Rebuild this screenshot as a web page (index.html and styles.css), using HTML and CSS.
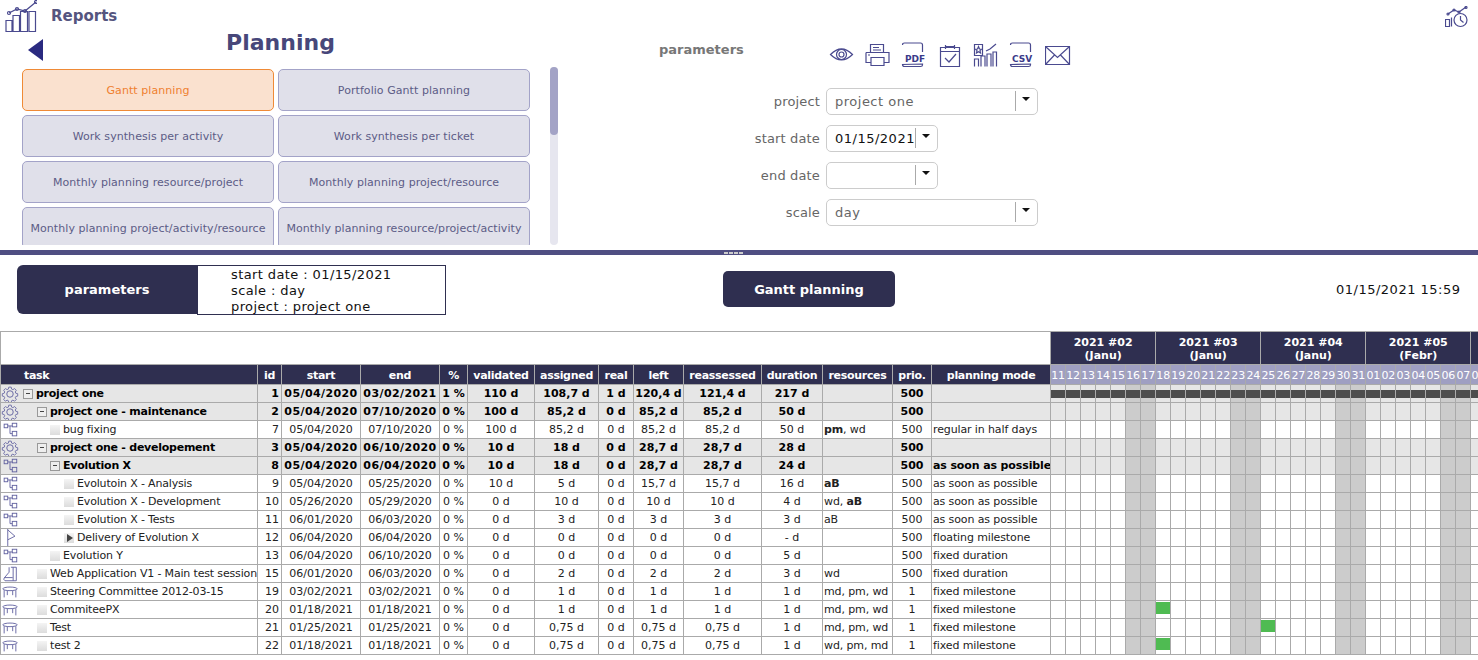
FILE: index.html
```html
<!DOCTYPE html>
<html lang="en">
<head>
    <meta charset="UTF-8">
    <title>Reports</title>
    <link rel="stylesheet" href="styles.css">
</head>
<body>
    <!-- shared table icons -->
    <svg class="defs" width="0" height="0">
        <symbol id="i-gear" viewBox="0 0 20 20">
            <path d="M8.5 1.5h3l.5 2.4 1.6.7 2.1-1.3 2.1 2.1-1.3 2.1.7 1.6 2.3.5v3l-2.3.5-.7 1.6 1.3 2.1-2.1 2.1-2.1-1.3-1.6.7-.5 2.3h-3l-.5-2.3-1.6-.7-2.1 1.3-2.1-2.1 1.3-2.1-.7-1.6-2.3-.5v-3l2.3-.5.7-1.6-1.3-2.1 2.1-2.1 2.1 1.3 1.6-.7z" transform="translate(1 1) scale(.9)"/>
            <circle cx="10" cy="10" r="3.6"/>
        </symbol>
        <symbol id="i-tree" viewBox="0 0 20 20">
            <rect x="3.5" y="3.5" width="4" height="4"/>
            <rect x="12.5" y="2.5" width="5" height="4"/>
            <rect x="12.5" y="11.5" width="5" height="5"/>
            <path d="M7.5 5.500h5M10 5.500v8.500h2.500"/>
        </symbol>
        <symbol id="i-flag" viewBox="0 0 20 20">
            <path d="M7.5 0v20M7.500 1l8 7-8 4"/>
        </symbol>
        <symbol id="i-flask" viewBox="0 0 20 20">
            <path d="M11 2.5h6v15H4.500q-2-1 -1-3L9 8V2.500M13.500 2.500v15M4 14h9"/>
        </symbol>
        <symbol id="i-table" viewBox="0 0 20 20">
            <ellipse cx="10" cy="6.500" rx="8" ry="2"/>
            <path d="M3.500 8v8M16.500 8v8M7 8.500v5M13 8.500v5"/>
        </symbol>
    </svg>

    <div class="top">
        <div class="brand">
            <div class="brand-left">
                <svg class="icon-reports" width="32" height="32" viewBox="0 0 32 32">
                    <path d="M1 20.500h6v11H1zM8 15.500h6.500v16H8zM15.500 11.500h7v20h-7zM24 11.500h6.500v20H24z"/>
                    <path d="M4 13l8-4 8 2 11-9"/>
                    <circle cx="4" cy="13" r="1.500"/><circle cx="12" cy="9" r="1.500"/><circle cx="20" cy="11" r="1.500"/><circle cx="31" cy="2" r="1.500"/>
                </svg>
                <span class="brand-name">Reports</span>
            </div>
            <svg class="icon-history" width="24" height="22" viewBox="0 0 24 22">
                <path d="M.5 13.500h4v7h-4zM6.500 11.500v9"/>
                <circle cx="15.500" cy="14" r="6.500"/>
                <path d="M15.500 10v4l3 2.500M3 8l6-4 5 2 7-5"/>
                <circle cx="3" cy="8" r="1"/><circle cx="9" cy="4" r="1"/><circle cx="14" cy="6" r="1"/><circle cx="21" cy="1.500" r="1"/>
            </svg>
        </div>

        <div class="top-body">
            <div class="left-panel">
                <div class="title-row">
                    <span class="back"></span>
                    <h1>Planning</h1>
                </div>
                <div class="menu-wrap">
                    <div class="menu">
                        <div class="report current">Gantt planning</div>
                        <div class="report">Portfolio Gantt planning</div>
                        <div class="report">Work synthesis per activity</div>
                        <div class="report">Work synthesis per ticket</div>
                        <div class="report">Monthly planning resource/project</div>
                        <div class="report">Monthly planning project/resource</div>
                        <div class="report">Monthly planning project/activity/resource</div>
                        <div class="report">Monthly planning resource/project/activity</div>
                    </div>
                    <div class="scrollbar"><div class="thumb"></div></div>
                </div>
            </div>

            <div class="right-panel">
                <div class="tools">
                    <span class="tools-title">parameters</span>
                    <svg class="tool" width="26" height="26" viewBox="0 0 26 26">
                        <path d="M1.500 12.500q11-11 22 0q-11 11-22 0z"/>
                        <circle cx="12.500" cy="12.500" r="5"/><circle cx="12.500" cy="12.500" r="2.500"/>
                    </svg>
                    <svg class="tool" width="26" height="26" viewBox="0 0 26 26">
                        <path d="M5.500 10V2.500h13V10M1 10.500h23v10h-5M6 20.500H1v-10M6 15.500h13v8H6z"/>
                        <path d="M8 5.500h6M8 8h8M3 13h2"/>
                    </svg>
                    <svg class="tool" width="26" height="26" viewBox="0 0 26 26">
                        <path d="M1.500 3q0-2 2-2h16q2 0 2 2V10M21.500 22v1q0 1.500-2 1.500H3.500q-2 0-2-2z"/>
                        <text class="tool-text" x="4" y="20">PDF</text>
                    </svg>
                    <svg class="tool" width="26" height="26" viewBox="0 0 26 26">
                        <path d="M3.500 5.500h19v19h-19zM3.500 9.500h19M8.500 3v4M17.500 3v4M8.500 4.500h9"/>
                        <path d="M8 16l4 4 7-8"/>
                    </svg>
                    <svg class="tool" width="26" height="26" viewBox="0 0 26 26">
                        <path d="M1.500 2.500h8v11h-8zM1.500 24.500V17h4v7.500M8 24.500V14h4v10.500M14 24.500V12h4v12.500M20 24.500V10h3.500v14.500"/>
                        <path d="M13 9l4-2 6-5"/>
                        <path d="M5.500 4.500l1 2.500 2 .2-1.500 1.500.5 2.300-2-1.200-2 1.200.5-2.300-1.500-1.500 2-.2z"/>
                    </svg>
                    <svg class="tool" width="26" height="26" viewBox="0 0 26 26">
                        <path d="M1.500 3q0-2 2-2h16q2 0 2 2V10M21.500 22v1q0 1.500-2 1.500H3.500q-2 0-2-2z"/>
                        <text class="tool-text" x="3" y="20">CSV</text>
                    </svg>
                    <svg class="tool" width="26" height="26" viewBox="0 0 26 26">
                        <path d="M.5 4.500h24v18H.5zM.5 4.500l12 11 12-11M.5 22.500l9-9.500M24.500 22.500l-9-9.500"/>
                    </svg>
                </div>
                <div class="form-row">
                    <label>project</label>
                    <div class="field wide"><span class="value">project one</span><span class="drop"></span></div>
                </div>
                <div class="form-row">
                    <label>start date</label>
                    <div class="field"><span class="value date">01/15/2021</span><span class="drop"></span></div>
                </div>
                <div class="form-row">
                    <label>end date</label>
                    <div class="field"><span class="value"></span><span class="drop"></span></div>
                </div>
                <div class="form-row">
                    <label>scale</label>
                    <div class="field wide"><span class="value">day</span><span class="drop"></span></div>
                </div>
            </div>
        </div>
    </div>

    <div class="splitter"><span class="grip"></span></div>

    <div class="summary">
        <div class="param-title">parameters</div>
        <div class="param-box">
            <div>start date : 01/15/2021</div>
            <div>scale : day</div>
            <div>project : project one</div>
        </div>
        <div class="report-name">Gantt planning</div>
        <div class="printed">01/15/2021 15:59</div>
    </div>

    <div class="gantt-wrap">
        <table class="gantt">
            <colgroup>
                <col class="c-task"><col class="c-id"><col class="c-date"><col class="c-date"><col class="c-pct">
                <col class="c-val"><col class="c-asg"><col class="c-real"><col class="c-left"><col class="c-rea">
                <col class="c-dur"><col class="c-res"><col class="c-pri"><col class="c-mode">
                <col class="c-d"><col class="c-d"><col class="c-d"><col class="c-d"><col class="c-d"><col class="c-d"><col class="c-d">
                <col class="c-d"><col class="c-d"><col class="c-d"><col class="c-d"><col class="c-d"><col class="c-d"><col class="c-d">
                <col class="c-d"><col class="c-d"><col class="c-d"><col class="c-d"><col class="c-d"><col class="c-d"><col class="c-d">
                <col class="c-d"><col class="c-d"><col class="c-d"><col class="c-d"><col class="c-d"><col class="c-d"><col class="c-d">
                <col class="c-d">
            </colgroup>
            <thead>
                <tr class="weeks">
                    <th colspan="14" class="blank"></th>
                    <th colspan="7">2021 #02<br>(Janu)</th>
                    <th colspan="7">2021 #03<br>(Janu)</th>
                    <th colspan="7">2021 #04<br>(Janu)</th>
                    <th colspan="7">2021 #05<br>(Febr)</th>
                    <th></th>
                </tr>
                <tr class="heads">
                    <th class="h-task">task</th><th>id</th><th>start</th><th>end</th><th>%</th><th>validated</th><th>assigned</th><th>real</th><th>left</th><th>reassessed</th><th>duration</th><th>resources</th><th>prio.</th><th>planning mode</th>
                    <th class="day">11</th><th class="day">12</th><th class="day">13</th><th class="day">14</th><th class="day">15</th><th class="day">16</th><th class="day">17</th>
                    <th class="day">18</th><th class="day">19</th><th class="day">20</th><th class="day">21</th><th class="day">22</th><th class="day">23</th><th class="day">24</th>
                    <th class="day">25</th><th class="day">26</th><th class="day">27</th><th class="day">28</th><th class="day">29</th><th class="day">30</th><th class="day">31</th>
                    <th class="day">01</th><th class="day">02</th><th class="day">03</th><th class="day">04</th><th class="day">05</th><th class="day">06</th><th class="day">07</th>
                    <th class="day">08</th>
                </tr>
            </thead>
            <tbody>
                <tr class="group">
                    <td class="task"><div class="t"><svg class="ti"><use href="#i-gear"/></svg><span class="tog minus lv0"></span>project one</div></td>
                    <td class="r">1</td><td>05/04/2020</td><td>03/02/2021</td><td>1 %</td><td>110 d</td><td>108,7 d</td><td>1 d</td><td>120,4 d</td><td>121,4 d</td><td>217 d</td><td class="l"></td><td>500</td><td class="l"></td>
                    <td><i class="bar"></i></td><td><i class="bar"></i></td><td><i class="bar"></i></td><td><i class="bar"></i></td><td><i class="bar"></i></td><td><i class="bar"></i></td><td><i class="bar"></i></td>
                    <td><i class="bar"></i></td><td><i class="bar"></i></td><td><i class="bar"></i></td><td><i class="bar"></i></td><td><i class="bar"></i></td><td><i class="bar"></i></td><td><i class="bar"></i></td>
                    <td><i class="bar"></i></td><td><i class="bar"></i></td><td><i class="bar"></i></td><td><i class="bar"></i></td><td><i class="bar"></i></td><td><i class="bar"></i></td><td><i class="bar"></i></td>
                    <td><i class="bar"></i></td><td><i class="bar"></i></td><td><i class="bar"></i></td><td><i class="bar"></i></td><td><i class="bar"></i></td><td><i class="bar"></i></td><td><i class="bar"></i></td>
                    <td><i class="bar"></i></td>
                </tr>
                <tr class="group">
                    <td class="task"><div class="t"><svg class="ti"><use href="#i-gear"/></svg><span class="tog minus lv1"></span>project one - maintenance</div></td>
                    <td class="r">2</td><td>05/04/2020</td><td>07/10/2020</td><td>0 %</td><td>100 d</td><td>85,2 d</td><td>0 d</td><td>85,2 d</td><td>85,2 d</td><td>50 d</td><td class="l"></td><td>500</td><td class="l"></td>
                    <td></td><td></td><td></td><td></td><td></td><td></td><td></td><td></td><td></td><td></td><td></td><td></td><td></td><td></td><td></td><td></td><td></td><td></td><td></td><td></td><td></td><td></td><td></td><td></td><td></td><td></td><td></td><td></td><td></td>
                </tr>
                <tr>
                    <td class="task"><div class="t"><svg class="ti"><use href="#i-tree"/></svg><span class="tog lv2"></span>bug fixing</div></td>
                    <td class="r">7</td><td>05/04/2020</td><td>07/10/2020</td><td>0 %</td><td>100 d</td><td>85,2 d</td><td>0 d</td><td>85,2 d</td><td>85,2 d</td><td>50 d</td><td class="l"><b>pm</b>, wd</td><td>500</td><td class="l">regular in half days</td>
                    <td></td><td></td><td></td><td></td><td></td><td></td><td></td><td></td><td></td><td></td><td></td><td></td><td></td><td></td><td></td><td></td><td></td><td></td><td></td><td></td><td></td><td></td><td></td><td></td><td></td><td></td><td></td><td></td><td></td>
                </tr>
                <tr class="group">
                    <td class="task"><div class="t"><svg class="ti"><use href="#i-gear"/></svg><span class="tog minus lv1"></span>project one - developement</div></td>
                    <td class="r">3</td><td>05/04/2020</td><td>06/10/2020</td><td>0 %</td><td>10 d</td><td>18 d</td><td>0 d</td><td>28,7 d</td><td>28,7 d</td><td>28 d</td><td class="l"></td><td>500</td><td class="l"></td>
                    <td></td><td></td><td></td><td></td><td></td><td></td><td></td><td></td><td></td><td></td><td></td><td></td><td></td><td></td><td></td><td></td><td></td><td></td><td></td><td></td><td></td><td></td><td></td><td></td><td></td><td></td><td></td><td></td><td></td>
                </tr>
                <tr class="group">
                    <td class="task"><div class="t"><svg class="ti"><use href="#i-tree"/></svg><span class="tog minus lv2"></span>Evolution X</div></td>
                    <td class="r">8</td><td>05/04/2020</td><td>06/04/2020</td><td>0 %</td><td>10 d</td><td>18 d</td><td>0 d</td><td>28,7 d</td><td>28,7 d</td><td>24 d</td><td class="l"></td><td>500</td><td class="l">as soon as possible</td>
                    <td></td><td></td><td></td><td></td><td></td><td></td><td></td><td></td><td></td><td></td><td></td><td></td><td></td><td></td><td></td><td></td><td></td><td></td><td></td><td></td><td></td><td></td><td></td><td></td><td></td><td></td><td></td><td></td><td></td>
                </tr>
                <tr>
                    <td class="task"><div class="t"><svg class="ti"><use href="#i-tree"/></svg><span class="tog lv3"></span>Evolutoin X - Analysis</div></td>
                    <td class="r">9</td><td>05/04/2020</td><td>05/25/2020</td><td>0 %</td><td>10 d</td><td>5 d</td><td>0 d</td><td>15,7 d</td><td>15,7 d</td><td>16 d</td><td class="l"><b>aB</b></td><td>500</td><td class="l">as soon as possible</td>
                    <td></td><td></td><td></td><td></td><td></td><td></td><td></td><td></td><td></td><td></td><td></td><td></td><td></td><td></td><td></td><td></td><td></td><td></td><td></td><td></td><td></td><td></td><td></td><td></td><td></td><td></td><td></td><td></td><td></td>
                </tr>
                <tr>
                    <td class="task"><div class="t"><svg class="ti"><use href="#i-tree"/></svg><span class="tog lv3"></span>Evolution X - Development</div></td>
                    <td class="r">10</td><td>05/26/2020</td><td>05/29/2020</td><td>0 %</td><td>0 d</td><td>10 d</td><td>0 d</td><td>10 d</td><td>10 d</td><td>4 d</td><td class="l">wd, <b>aB</b></td><td>500</td><td class="l">as soon as possible</td>
                    <td></td><td></td><td></td><td></td><td></td><td></td><td></td><td></td><td></td><td></td><td></td><td></td><td></td><td></td><td></td><td></td><td></td><td></td><td></td><td></td><td></td><td></td><td></td><td></td><td></td><td></td><td></td><td></td><td></td>
                </tr>
                <tr>
                    <td class="task"><div class="t"><svg class="ti"><use href="#i-tree"/></svg><span class="tog lv3"></span>Evolution X - Tests</div></td>
                    <td class="r">11</td><td>06/01/2020</td><td>06/03/2020</td><td>0 %</td><td>0 d</td><td>3 d</td><td>0 d</td><td>3 d</td><td>3 d</td><td>3 d</td><td class="l">aB</td><td>500</td><td class="l">as soon as possible</td>
                    <td></td><td></td><td></td><td></td><td></td><td></td><td></td><td></td><td></td><td></td><td></td><td></td><td></td><td></td><td></td><td></td><td></td><td></td><td></td><td></td><td></td><td></td><td></td><td></td><td></td><td></td><td></td><td></td><td></td>
                </tr>
                <tr>
                    <td class="task"><div class="t"><svg class="ti"><use href="#i-flag"/></svg><span class="tog mile lv3"></span>Delivery of Evolution X</div></td>
                    <td class="r">12</td><td>06/04/2020</td><td>06/04/2020</td><td>0 %</td><td>0 d</td><td>0 d</td><td>0 d</td><td>0 d</td><td>0 d</td><td>- d</td><td class="l"></td><td>500</td><td class="l">floating milestone</td>
                    <td></td><td></td><td></td><td></td><td></td><td></td><td></td><td></td><td></td><td></td><td></td><td></td><td></td><td></td><td></td><td></td><td></td><td></td><td></td><td></td><td></td><td></td><td></td><td></td><td></td><td></td><td></td><td></td><td></td>
                </tr>
                <tr>
                    <td class="task"><div class="t"><svg class="ti"><use href="#i-tree"/></svg><span class="tog lv2"></span>Evolution Y</div></td>
                    <td class="r">13</td><td>06/04/2020</td><td>06/10/2020</td><td>0 %</td><td>0 d</td><td>0 d</td><td>0 d</td><td>0 d</td><td>0 d</td><td>5 d</td><td class="l"></td><td>500</td><td class="l">fixed duration</td>
                    <td></td><td></td><td></td><td></td><td></td><td></td><td></td><td></td><td></td><td></td><td></td><td></td><td></td><td></td><td></td><td></td><td></td><td></td><td></td><td></td><td></td><td></td><td></td><td></td><td></td><td></td><td></td><td></td><td></td>
                </tr>
                <tr>
                    <td class="task"><div class="t"><svg class="ti"><use href="#i-flask"/></svg><span class="tog lv1"></span>Web Application V1 - Main test session</div></td>
                    <td class="r">15</td><td>06/01/2020</td><td>06/03/2020</td><td>0 %</td><td>0 d</td><td>2 d</td><td>0 d</td><td>2 d</td><td>2 d</td><td>3 d</td><td class="l">wd</td><td>500</td><td class="l">fixed duration</td>
                    <td></td><td></td><td></td><td></td><td></td><td></td><td></td><td></td><td></td><td></td><td></td><td></td><td></td><td></td><td></td><td></td><td></td><td></td><td></td><td></td><td></td><td></td><td></td><td></td><td></td><td></td><td></td><td></td><td></td>
                </tr>
                <tr>
                    <td class="task"><div class="t"><svg class="ti"><use href="#i-table"/></svg><span class="tog lv1"></span>Steering Committee 2012-03-15</div></td>
                    <td class="r">19</td><td>03/02/2021</td><td>03/02/2021</td><td>0 %</td><td>0 d</td><td>1 d</td><td>0 d</td><td>1 d</td><td>1 d</td><td>1 d</td><td class="l">md, pm, wd</td><td>1</td><td class="l">fixed milestone</td>
                    <td></td><td></td><td></td><td></td><td></td><td></td><td></td><td></td><td></td><td></td><td></td><td></td><td></td><td></td><td></td><td></td><td></td><td></td><td></td><td></td><td></td><td></td><td></td><td></td><td></td><td></td><td></td><td></td><td></td>
                </tr>
                <tr>
                    <td class="task"><div class="t"><svg class="ti"><use href="#i-table"/></svg><span class="tog lv1"></span>CommiteePX</div></td>
                    <td class="r">20</td><td>01/18/2021</td><td>01/18/2021</td><td>0 %</td><td>0 d</td><td>1 d</td><td>0 d</td><td>1 d</td><td>1 d</td><td>1 d</td><td class="l">md, pm, wd</td><td>1</td><td class="l">fixed milestone</td>
                    <td></td><td></td><td></td><td></td><td></td><td></td><td></td><td><i class="done"></i></td><td></td><td></td><td></td><td></td><td></td><td></td><td></td><td></td><td></td><td></td><td></td><td></td><td></td><td></td><td></td><td></td><td></td><td></td><td></td><td></td><td></td>
                </tr>
                <tr>
                    <td class="task"><div class="t"><svg class="ti"><use href="#i-table"/></svg><span class="tog lv1"></span>Test</div></td>
                    <td class="r">21</td><td>01/25/2021</td><td>01/25/2021</td><td>0 %</td><td>0 d</td><td>0,75 d</td><td>0 d</td><td>0,75 d</td><td>0,75 d</td><td>1 d</td><td class="l">md, pm, wd</td><td>1</td><td class="l">fixed milestone</td>
                    <td></td><td></td><td></td><td></td><td></td><td></td><td></td><td></td><td></td><td></td><td></td><td></td><td></td><td></td><td><i class="done"></i></td><td></td><td></td><td></td><td></td><td></td><td></td><td></td><td></td><td></td><td></td><td></td><td></td><td></td><td></td>
                </tr>
                <tr>
                    <td class="task"><div class="t"><svg class="ti"><use href="#i-table"/></svg><span class="tog lv1"></span>test 2</div></td>
                    <td class="r">22</td><td>01/18/2021</td><td>01/18/2021</td><td>0 %</td><td>0 d</td><td>0,75 d</td><td>0 d</td><td>0,75 d</td><td>0,75 d</td><td>1 d</td><td class="l">wd, pm, md</td><td>1</td><td class="l">fixed milestone</td>
                    <td></td><td></td><td></td><td></td><td></td><td></td><td></td><td><i class="done"></i></td><td></td><td></td><td></td><td></td><td></td><td></td><td></td><td></td><td></td><td></td><td></td><td></td><td></td><td></td><td></td><td></td><td></td><td></td><td></td><td></td><td></td>
                </tr>
            </tbody>
        </table>
    </div>
</body>
</html>
```

FILE: styles.css
```css
html, body {
    margin: 0;
    padding: 0;
    height: 660px;
    overflow: hidden;
    background: white;
    font-family: "DejaVu Sans", Verdana, sans-serif;
    color: #111;
}
.defs {
    display: block;
    height: 0;
}

/* top panel */
.top {
    height: 250px;
    overflow: hidden;
}
.brand {
    height: 32px;
    display: flex;
    justify-content: space-between;
}
.brand-left {
    display: flex;
    padding-left: 5px;
}
.brand-name {
    margin-left: 14px;
    padding-top: 7px;
    font-size: 15px;
    font-weight: bold;
    color: #55557f;
}
.icon-reports,
.icon-history,
.tool {
    fill: none;
    stroke: #4a4a8f;
    stroke-width: 1.2;
}
.icon-history {
    margin: 6px 9px 0 0;
}
.top-body {
    display: flex;
}

/* report list */
.left-panel {
    width: 560px;
    flex: none;
}
.title-row {
    height: 37px;
    display: flex;
    padding-left: 28px;
}
.back {
    width: 0;
    height: 0;
    margin-top: 7px;
    border-style: solid;
    border-width: 11px 15px 11px 0;
    border-color: transparent #2a2a80 transparent transparent;
}
.title-row h1 {
    width: 475px;
    margin: 0;
    padding-top: 1px;
    text-align: center;
    font-size: 22px;
    line-height: 20px;
    color: #47477a;
}
.menu-wrap {
    height: 176px;
    margin-top: -2px;
    padding-top: 2px;
    display: flex;
    overflow: hidden;
}
.menu {
    width: 508px;
    margin-left: 22px;
    display: grid;
    grid-template-columns: 252px 252px;
    grid-auto-rows: 42px;
    gap: 4px;
}
.report {
    box-sizing: border-box;
    display: flex;
    align-items: center;
    justify-content: center;
    border: 1px solid #a3a3c8;
    border-radius: 5px;
    background: #e0e0ea;
    color: #5c5c86;
    font-size: 11px;
    letter-spacing: .06px;
    white-space: nowrap;
}
.report.current {
    background: #fae1cf;
    border-color: #ef8a36;
    color: #ef8030;
}
.scrollbar {
    width: 8px;
    height: 178px;
    margin: -2px 0 0 20px;
    border-radius: 4px;
    background: #e6e6ef;
}
.thumb {
    height: 68px;
    border-radius: 4px;
    background: #a3a3c6;
}

/* parameters form */
.right-panel {
    flex: 1;
}
.tools {
    display: flex;
    gap: 10px;
    height: 26px;
    padding: 10px 0 20px 99px;
}
.tools-title {
    width: 160px;
    padding-top: 1px;
    font-size: 13px;
    line-height: 14px;
    font-weight: bold;
    color: #777;
}
.tool-text {
    fill: #3a3a8a;
    stroke: none;
    font-size: 9px;
    font-weight: bold;
}
.form-row {
    display: flex;
    align-items: center;
    margin-bottom: 10px;
}
.form-row label {
    width: 260px;
    margin-right: 6px;
    text-align: right;
    font-size: 13px;
    color: #666;
    letter-spacing: .15px;
}
.field {
    box-sizing: border-box;
    width: 112px;
    height: 27px;
    display: flex;
    border: 1px solid #ccc;
    border-radius: 5px;
}
.field.wide {
    width: 212px;
}
.value {
    flex: 1;
    padding: 4px 0 0 8px;
    font-size: 13px;
    line-height: 17px;
    color: #666;
    letter-spacing: .5px;
}
.value.date {
    color: #111;
}
.drop {
    width: 21px;
    height: 20px;
    margin-top: 2px;
    border-left: 1px solid #aaa;
    position: relative;
}
.drop::after {
    content: "";
    position: absolute;
    top: 6px;
    left: 6px;
    border-style: solid;
    border-width: 4px 4px 0 4px;
    border-color: #111 transparent transparent transparent;
}

/* splitter */
.splitter {
    height: 5px;
    padding-right: 10px;
    background: #4f4e82;
    display: flex;
    justify-content: center;
}
.grip {
    width: 20px;
    height: 2px;
    margin-top: 2px;
    background: repeating-linear-gradient(90deg, #ccc 0 4px, #4f4e82 4px 5px);
}

/* summary line */
.summary {
    height: 50px;
    margin-top: 10px;
    padding-left: 17px;
    display: flex;
    font-size: 13px;
}
.param-title {
    width: 180px;
    height: 49px;
    display: flex;
    align-items: center;
    justify-content: center;
    background: #2f2f50;
    color: white;
    font-weight: bold;
    border-radius: 6px 0 0 6px;
}
.param-box {
    box-sizing: border-box;
    width: 249px;
    height: 50px;
    padding: 1px 0 0 33px;
    border: 1px solid #2f2f50;
    line-height: 16px;
    letter-spacing: .4px;
}
.report-name {
    width: 172px;
    height: 36px;
    margin: 6px 0 0 277px;
    display: flex;
    align-items: center;
    justify-content: center;
    background: #2f2f50;
    color: white;
    font-weight: bold;
    border-radius: 5px;
}
.printed {
    margin-left: 441px;
    padding-top: 17px;
    white-space: nowrap;
    letter-spacing: .5px;
}

/* gantt table */
.gantt-wrap {
    margin-top: 16px;
    overflow: hidden;
}
.gantt {
    table-layout: fixed;
    border-collapse: collapse;
    width: 1485px;
    font-size: 11px;
}
.c-task { width: 257px; }
.c-id { width: 24px; }
.c-date { width: 79px; }
.c-pct { width: 28px; }
.c-val { width: 67px; }
.c-asg { width: 64px; }
.c-real { width: 35px; }
.c-left { width: 50px; }
.c-rea { width: 78px; }
.c-dur { width: 61px; }
.c-res { width: 70px; }
.c-pri { width: 39px; }
.c-mode { width: 119px; }
.c-d { width: 15px; }

.gantt th,
.gantt td {
    border: 1px solid #aaa;
    padding: 0;
    white-space: nowrap;
    overflow: hidden;
}
.gantt th {
    padding-top: 1px;
    background: #2f2f50;
    color: white;
    font-weight: bold;
    text-align: center;
    line-height: 13px;
}
.weeks {
    height: 33px;
}
.weeks th.blank {
    background: white;
}
.heads {
    height: 20px;
}
.heads th {
    letter-spacing: -.3px;
}
.gantt th.h-task {
    text-align: left;
    padding-left: 23px;
}
.gantt th.day {
    background: #9f9fc2;
    font-weight: normal;
    letter-spacing: -.2px;
}
.gantt tbody tr {
    height: 18px;
}
.gantt td {
    text-align: center;
    line-height: 16px;
    color: #222;
}
.gantt td:nth-child(-n+14):not(.task) {
    padding-top: 1px;
}
.gantt td.l {
    text-align: left;
    padding-left: 1px;
    letter-spacing: -.12px;
}
.gantt td.r {
    text-align: right;
    padding-right: 2px;
}
.gantt tr.group {
    background: #e6e6e6;
    font-weight: bold;
}
.gantt tr.group td {
    color: #000;
}
.gantt tr.group td:nth-child(3),
.gantt tr.group td:nth-child(4) {
    letter-spacing: .4px;
}
.gantt td:nth-child(n+15):nth-child(7n+6),
.gantt td:nth-child(n+15):nth-child(7n+7) {
    background: #ccc;
}
.gantt td.task {
    text-align: left;
    letter-spacing: -.16px;
}
.gantt tr.group td.task {
    letter-spacing: -.25px;
}
.t {
    display: flex;
    align-items: center;
    height: 17px;
    overflow: hidden;
}
.ti {
    width: 18px;
    height: 18px;
    flex: none;
    margin-right: 2px;
    fill: none;
    stroke: #5f5f9e;
    stroke-width: 1;
}
.tog {
    box-sizing: border-box;
    width: 10px;
    height: 10px;
    flex: none;
    margin-right: 3px;
    background: linear-gradient(#f4f4f4, #dcdcdc);
    position: relative;
}
.lv0 { margin-left: 2px; }
.lv1 { margin-left: 16px; }
.lv2 { margin-left: 29px; }
.lv3 { margin-left: 43px; }
.tog.minus {
    border: 1px solid #999;
    background: #eee;
}
.tog.minus::after {
    content: "";
    position: absolute;
    left: 2px;
    top: 3px;
    width: 4px;
    height: 1px;
    background: #444;
}
.tog.mile::after {
    content: "";
    position: absolute;
    left: 3px;
    top: 1px;
    border-style: solid;
    border-width: 4px 0 4px 6px;
    border-color: transparent transparent transparent #444;
}
.bar {
    display: block;
    height: 8px;
    margin-top: 1px;
    background: #4d4d4d;
}
.done {
    display: block;
    height: 12px;
    margin-bottom: 4px;
    background: #4fbb52;
}
```
